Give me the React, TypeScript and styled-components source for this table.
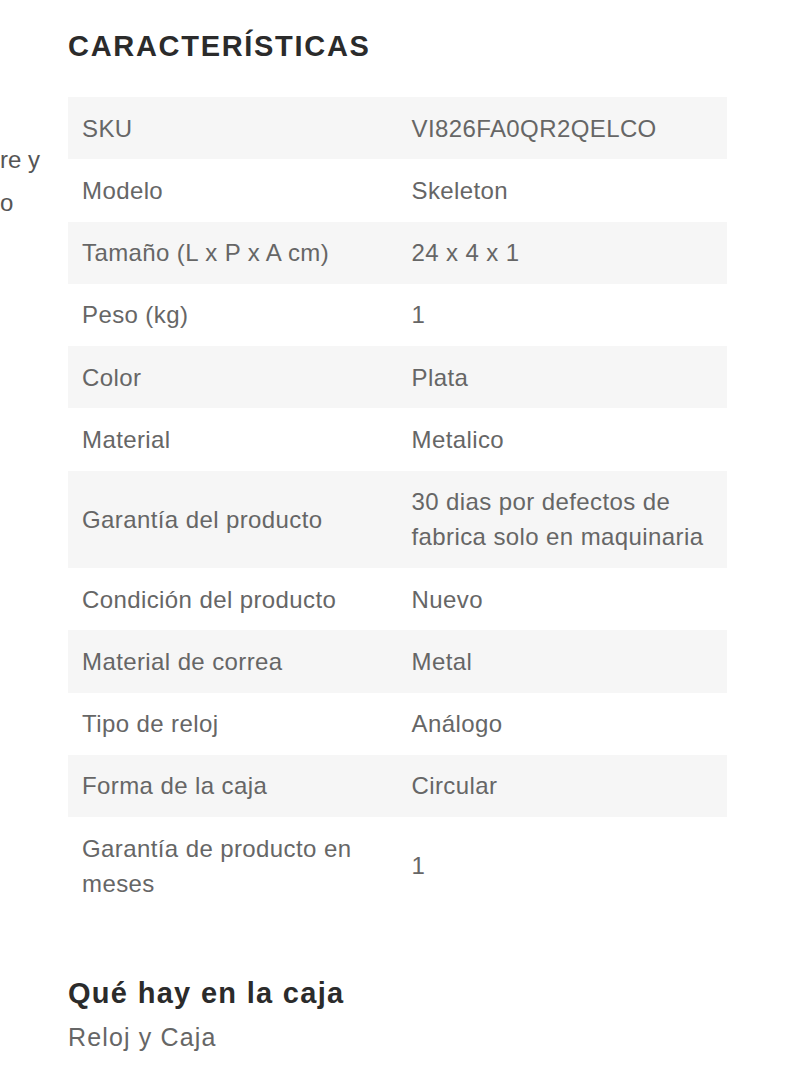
import React from "react";
import styled, { createGlobalStyle } from "styled-components";

const Global = createGlobalStyle`
  html, body { margin: 0; padding: 0; background: #ffffff; }
  body { font-family: "Liberation Sans", Arial, sans-serif; }
`;

const Page = styled.div`
  display: flex;
  width: 800px;
  min-height: 1071px;
  overflow: hidden;
`;

const Side = styled.div`
  width: 68px;
  flex: none;
  padding-top: 138px;
`;

const SideLine = styled.div`
  font-size: 24px;
  line-height: 43px;
  color: #555555;
  white-space: nowrap;
`;

const Main = styled.div`
  width: 659px;
  flex: none;
  padding-top: 28px;
`;

const Title = styled.h2`
  margin: 0 0 33px;
  font-size: 29px;
  line-height: 36px;
  font-weight: 700;
  letter-spacing: 1.7px;
  color: #2b2b2b;
`;

const Table = styled.table`
  width: 100%;
  border-collapse: collapse;
  table-layout: fixed;
`;

const Row = styled.tr<{ $striped: boolean }>`
  background: ${(p) => (p.$striped ? "#f6f6f6" : "#ffffff")};
`;

const Cell = styled.td`
  width: 50%;
  padding: 13.6px 14px 13.7px;
  font-size: 24px;
  line-height: 35px;
  letter-spacing: 0.4px;
  color: #666666;
  vertical-align: middle;
`;

const SubTitle = styled.h3`
  margin: 62px 0 0;
  font-size: 29px;
  line-height: 35px;
  font-weight: 700;
  letter-spacing: 1.3px;
  color: #2b2b2b;
`;

const Body = styled.p`
  margin: 9px 0 0;
  font-size: 25px;
  line-height: 35px;
  letter-spacing: 1.15px;
  color: #666666;
`;

const rows: [string, string][] = [
  ["SKU", "VI826FA0QR2QELCO"],
  ["Modelo", "Skeleton"],
  ["Tamaño (L x P x A cm)", "24 x 4 x 1"],
  ["Peso (kg)", "1"],
  ["Color", "Plata"],
  ["Material", "Metalico"],
  ["Garantía del producto", "30 dias por defectos de fabrica solo en maquinaria"],
  ["Condición del producto", "Nuevo"],
  ["Material de correa", "Metal"],
  ["Tipo de reloj", "Análogo"],
  ["Forma de la caja", "Circular"],
  ["Garantía de producto en meses", "1"],
];

export default function App() {
  return (
    <>
      <Global />
      <Page>
        <Side>
          <SideLine>re y</SideLine>
          <SideLine>o</SideLine>
        </Side>
        <Main>
          <Title>CARACTERÍSTICAS</Title>
          <Table>
            <tbody>
              {rows.map(([k, v], i) => (
                <Row key={k} $striped={i % 2 === 0}>
                  <Cell>{k}</Cell>
                  <Cell>{v}</Cell>
                </Row>
              ))}
            </tbody>
          </Table>
          <SubTitle>Qué hay en la caja</SubTitle>
          <Body>Reloj y Caja</Body>
        </Main>
      </Page>
    </>
  );
}
